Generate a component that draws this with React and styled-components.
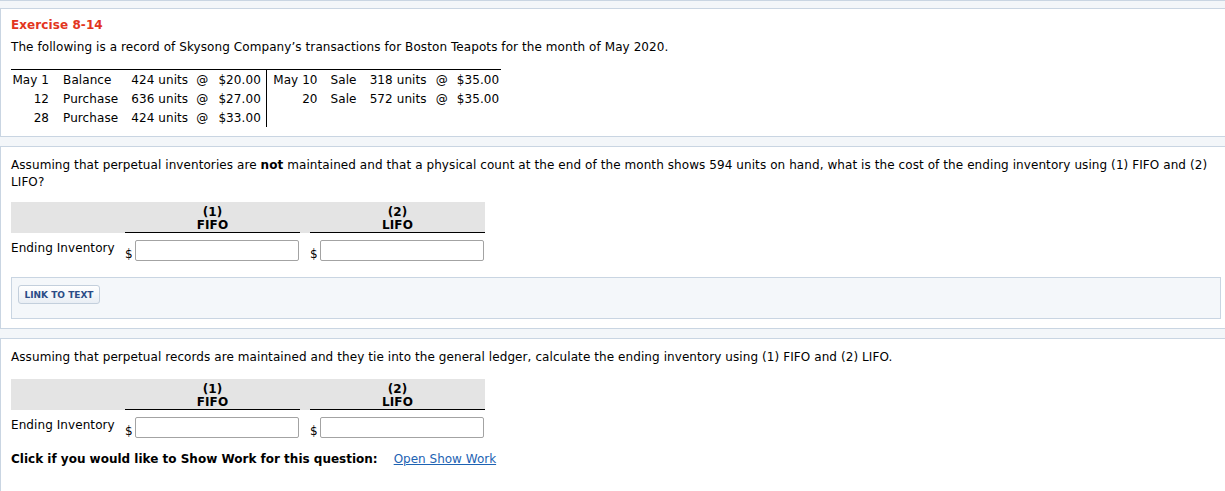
import React from "react";
import styled, { createGlobalStyle } from "styled-components";

const GlobalStyle = createGlobalStyle`
  body {
    margin: 0;
    background: #f3f6f9;
    font-family: "DejaVu Sans", Verdana, sans-serif;
    font-size: 12px;
    letter-spacing: 0.08px;
    color: #000;
  }
`;

const TopRule = styled.div`
  height: 7px;
  border-top: 1px solid #c9d5e2;
`;

const Panel = styled.section`
  background: #fff;
  border: 1px solid #c9d5e2;
  border-right: none;
  padding: ${(p) => (p.$first ? "8px" : "10px")} 4px 9px 10px;
  margin-bottom: ${(p) => (p.$last ? 0 : 9)}px;
  min-height: ${(p) => p.$minHeight || 0}px;
`;

const Title = styled.h1`
  margin: 0;
  font-size: 12px;
  line-height: 16px;
  font-weight: bold;
  color: #e2351e;
`;

const Text = styled.p`
  margin: ${(p) => p.$top || 0}px 0 0;
  line-height: ${(p) => p.$lh || 17}px;
`;

const TxTable = styled.table`
  margin-top: 14px;
  border-collapse: collapse;
  table-layout: fixed;
  width: 490px;
  border-top: 1px solid #000;
`;

const Td = styled.td`
  height: 19px;
  padding: 0 ${(p) => (p.$right ? "6px" : "0")} 0 ${(p) => p.$pl || 0}px;
  text-align: ${(p) => (p.$right ? "right" : "left")};
  white-space: nowrap;
  vertical-align: middle;
  border-right: ${(p) => (p.$divider ? "1px solid #000" : "none")};
`;

const AnswerGrid = styled.div`
  margin-top: ${(p) => p.$top}px;
  width: 474px;
`;

const HeadRow = styled.div`
  display: grid;
  grid-template-columns: 114px 175px 10px 175px;
  background: #e4e4e4;
`;

const HeadCell = styled.div`
  padding-top: 4px;
  text-align: center;
  font-weight: bold;
  line-height: 13px;
  border-bottom: 1px solid #000;
`;

const InputRow = styled.div`
  display: grid;
  grid-template-columns: 114px 175px 10px 175px;
  margin-top: 7px;
`;

const RowLabel = styled.div`
  line-height: 17px;
`;

const MoneyCell = styled.div`
  display: flex;
  align-items: flex-end;
`;

const Dollar = styled.span`
  width: 10px;
  line-height: 14px;
`;

const MoneyInput = styled.input`
  flex: 1;
  box-sizing: border-box;
  height: 21px;
  margin: 0 1px 0 0;
  border: 1px solid #a3a3a3;
  border-radius: 2px;
  background: #fff;
  font: inherit;
`;

const LinkBox = styled.div`
  margin-top: 16px;
  padding: 7px 6px 14px;
  background: #f4f7fa;
  border: 1px solid #c9d5e2;
`;

const LinkButton = styled.button`
  height: 19px;
  width: 82px;
  padding: 0;
  border: 1px solid #c3cfdc;
  border-radius: 3px;
  background: linear-gradient(#ffffff, #e9eef4);
  color: #2b4c86;
  font-family: "DejaVu Sans", Verdana, sans-serif;
  font-size: 9px;
  font-weight: bold;
  letter-spacing: 0;
  cursor: pointer;
`;

const ShowWork = styled.div`
  margin-top: 13px;
  line-height: 17px;
  font-weight: bold;
  letter-spacing: 0;
  display: flex;
  gap: 16px;
`;

const WorkLink = styled.a`
  font-weight: normal;
  color: #1d63b3;
  text-decoration: underline;
`;

const purchases = [
  ["May 1", "Balance", "424 units", "$20.00"],
  ["12", "Purchase", "636 units", "$27.00"],
  ["28", "Purchase", "424 units", "$33.00"],
];

const sales = [
  ["May 10", "Sale", "318 units", "$35.00"],
  ["20", "Sale", "572 units", "$35.00"],
];

const widths = [44, 72, 65, 22, 52, 57, 42, 66, 21, 48];

const Answer = ({ top }) => (
  <AnswerGrid $top={top}>
    <HeadRow>
      <div />
      <HeadCell>
        (1)
        <br />
        FIFO
      </HeadCell>
      <div />
      <HeadCell>
        (2)
        <br />
        LIFO
      </HeadCell>
    </HeadRow>
    <InputRow>
      <RowLabel>Ending Inventory</RowLabel>
      <MoneyCell>
        <Dollar>$</Dollar>
        <MoneyInput type="text" />
      </MoneyCell>
      <div />
      <MoneyCell>
        <Dollar>$</Dollar>
        <MoneyInput type="text" />
      </MoneyCell>
    </InputRow>
  </AnswerGrid>
);

export default function App() {
  return (
    <>
      <GlobalStyle />
      <TopRule />
      <Panel $first>
        <Title>Exercise 8-14</Title>
        <Text $top={6} $lh={16}>
          The following is a record of Skysong Company’s transactions for Boston Teapots for the
          month of May 2020.
        </Text>
        <TxTable>
          <colgroup>
            {widths.map((w, i) => (
              <col key={i} style={{ width: w }} />
            ))}
          </colgroup>
          <tbody>
            {purchases.map((p, i) => {
              const s = sales[i];
              return (
                <tr key={i}>
                  <Td $right>{p[0]}</Td>
                  <Td $pl={8}>{p[1]}</Td>
                  <Td $pl={4}>{p[2]}</Td>
                  <Td $pl={4}>@</Td>
                  <Td $pl={4} $divider>
                    {p[3]}
                  </Td>
                  <Td $right>{s ? s[0] : ""}</Td>
                  <Td $pl={7}>{s ? s[1] : ""}</Td>
                  <Td $pl={4}>{s ? s[2] : ""}</Td>
                  <Td $pl={4}>{s ? "@" : ""}</Td>
                  <Td $pl={4}>{s ? s[3] : ""}</Td>
                </tr>
              );
            })}
          </tbody>
        </TxTable>
      </Panel>

      <Panel>
        <Text>
          Assuming that perpetual inventories are <b>not</b> maintained and that a physical count
          at the end of the month shows 594 units on hand, what is the cost of the ending
          inventory using (1) FIFO and (2) LIFO?
        </Text>
        <Answer top={11} />
        <LinkBox>
          <LinkButton type="button">LINK TO TEXT</LinkButton>
        </LinkBox>
      </Panel>

      <Panel $last $minHeight={136}>
        <Text>
          Assuming that perpetual records are maintained and they tie into the general ledger,
          calculate the ending inventory using (1) FIFO and (2) LIFO.
        </Text>
        <Answer top={13} />
        <ShowWork>
          Click if you would like to Show Work for this question:
          <WorkLink href="#">Open Show Work</WorkLink>
        </ShowWork>
      </Panel>
    </>
  );
}
